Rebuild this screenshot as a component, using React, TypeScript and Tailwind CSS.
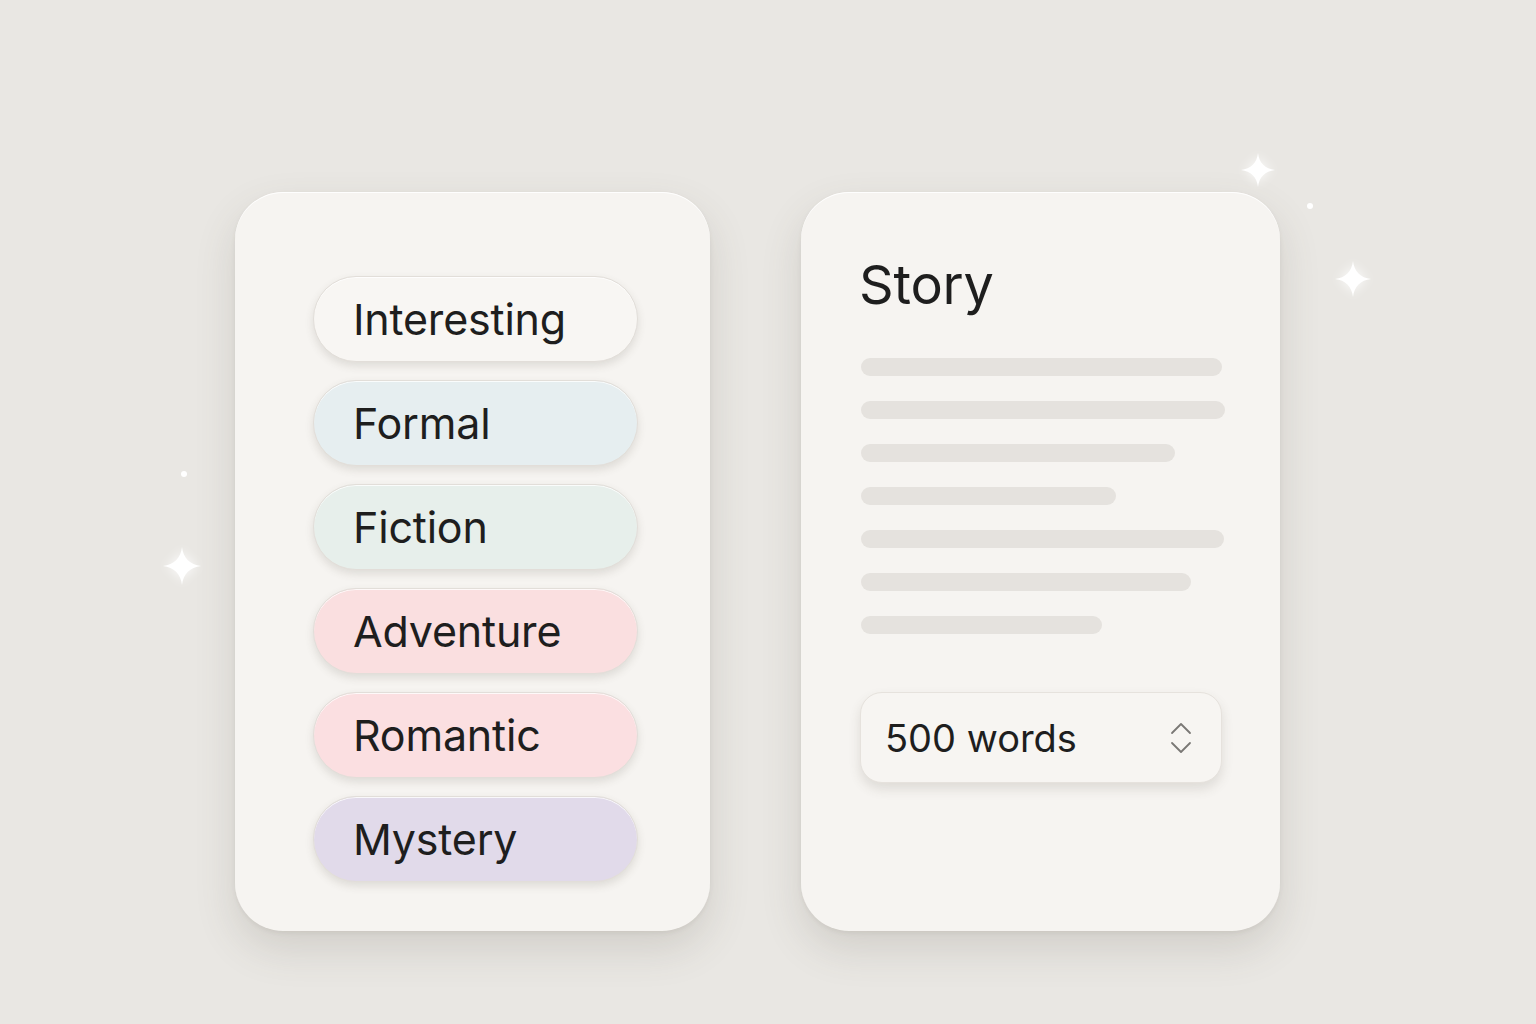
const TAGS = [
  { label: "Interesting", bg: "bg-[#f8f6f3]" },
  { label: "Formal", bg: "bg-[#e6eef0]" },
  { label: "Fiction", bg: "bg-[#e7efeb]" },
  { label: "Adventure", bg: "bg-[#fadfe0]" },
  { label: "Romantic", bg: "bg-[#fbdfe1]" },
  { label: "Mystery", bg: "bg-[#e1daea]" },
]

// widths of the placeholder text lines, in px
const LINES = [361, 364, 314, 255, 363, 330, 241]

function Sparkle({ size, className }: { size: number; className: string }) {
  return (
    <svg
      width={size}
      height={size}
      viewBox="0 0 24 24"
      className={`absolute drop-shadow-[0_0_6px_rgba(255,255,255,0.9)] ${className}`}
    >
      <path d="M12 0C12.8 7 17 11.2 24 12C17 12.8 12.8 17 12 24C11.2 17 7 12.8 0 12C7 11.2 11.2 7 12 0Z" fill="#ffffff" />
    </svg>
  )
}

function UpDown() {
  return (
    <svg width="24" height="34" viewBox="0 0 24 34" fill="none" stroke="#7a7875" strokeWidth="1.8" strokeLinecap="round" strokeLinejoin="round">
      <path d="M3 12L12 3L21 12" />
      <path d="M3 22L12 31L21 22" />
    </svg>
  )
}

export default function App() {
  return (
    <div className="relative h-[1024px] w-[1536px] overflow-hidden bg-[#e9e7e3] font-['Inter',sans-serif] text-[#1e1e1e]">
      <Sparkle size={34} className="left-[1241px] top-[153px]" />
      <Sparkle size={36} className="left-[1335px] top-[261px]" />
      <Sparkle size={38} className="left-[163px] top-[547px]" />
      <span className="absolute left-[1307px] top-[203px] size-[6px] rounded-full bg-white" />
      <span className="absolute left-[181px] top-[471px] size-[6px] rounded-full bg-white" />

      <div className="flex gap-[91px] pl-[235px] pt-[192px]">
        {/* tag card */}
        <div className="h-[739px] w-[475px] rounded-[48px] bg-[#f6f4f1] pl-[78px] pt-[84px] shadow-[0_18px_40px_rgba(90,80,70,0.16),0_2px_4px_rgba(90,80,70,0.08),inset_0_1px_0_rgba(255,255,255,0.9)]">
          <div className="flex flex-col gap-[18px]">
            {TAGS.map((t) => (
              <div
                key={t.label}
                className={`flex h-[86px] w-[325px] items-center rounded-full border border-[#e2ded9] pl-[39px] ${t.bg} shadow-[0_4px_8px_rgba(80,70,60,0.14),inset_0_1px_0_rgba(255,255,255,0.8)]`}
              >
                <span className="text-[43px] leading-none tracking-[-0.2px]">{t.label}</span>
              </div>
            ))}
          </div>
        </div>

        {/* story card */}
        <div className="h-[739px] w-[479px] rounded-[48px] bg-[#f6f4f1] pl-[57px] pt-[61px] shadow-[0_18px_40px_rgba(90,80,70,0.16),0_2px_4px_rgba(90,80,70,0.08),inset_0_1px_0_rgba(255,255,255,0.9)]">
          <h1 className="pl-[1px] text-[54px] font-normal leading-[64px] tracking-[-0.2px]">Story</h1>
          <div className="mt-[41px] flex flex-col gap-[25px] pl-[3px]">
            {LINES.map((w, i) => (
              <div key={i} className="h-[18px] rounded-full bg-[#e5e2de]" style={{ width: w }} />
            ))}
          </div>
          <div className="ml-[2px] mt-[58px] flex h-[91px] w-[362px] items-center justify-between rounded-[22px] border border-[#e6e2dd] bg-[#f7f5f2] pl-[24px] pr-[28px] shadow-[0_6px_12px_rgba(80,70,60,0.14)]">
            <span className="text-[38px] leading-none">500 words</span>
            <UpDown />
          </div>
        </div>
      </div>
    </div>
  )
}
